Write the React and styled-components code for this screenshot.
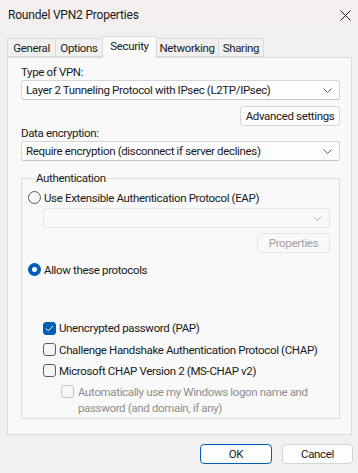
import React from 'react'
import styled, { createGlobalStyle } from 'styled-components'

const GlobalStyle = createGlobalStyle`
  body {
    margin: 0;
    background: #f0f0f0;
    font-family: Roboto, "Liberation Sans", sans-serif;
    font-size: 11.5px;
    letter-spacing: -0.35px;
    color: #1a1a1a;
    white-space: nowrap;
  }
`

const Window = styled.div`
  width: 358px;
  height: 473px;
  display: flex;
  flex-direction: column;
  background: #f0f0f0;
  border-radius: 0 0 8px 8px;
  overflow: hidden;
`

const TitleBar = styled.div`
  height: 30px;
  display: flex;
  align-items: center;
  justify-content: space-between;
  padding: 0 7px 0 8px;
  background: #f3efef;
  font-size: 12px;
  letter-spacing: -0.2px;
`

const Body = styled.div`
  flex: 1;
  display: flex;
  flex-direction: column;
  padding: 8px 6px 0 7px;
`

const TabStrip = styled.div`
  display: flex;
  align-items: flex-end;
  height: 19px;
  position: relative;
  z-index: 1;
`

const Tab = styled.div`
  width: ${p => p.w}px;
  height: ${p => (p.active ? '22px' : '19px')};
  margin-bottom: ${p => (p.active ? '-1px' : '0')};
  padding-top: ${p => (p.active ? '2px' : '0')};
  margin-left: ${p => (p.active ? '-1px' : '0')};
  margin-right: ${p => (p.active ? '-1px' : '0')};
  display: flex;
  justify-content: center;
  align-items: ${p => (p.active ? 'flex-start' : 'center')};
  box-sizing: border-box;
  background: ${p => (p.active ? '#f9f9f9' : '#f0f0f0')};
  border: 1px solid #dadada;
  border-bottom: ${p => (p.active ? 'none' : '1px solid #dadada')};
  border-left: ${p => (p.first || p.active ? '1px solid #dadada' : 'none')};
  z-index: ${p => (p.active ? 2 : 1)};
`

const Panel = styled.div`
  height: 378px;
  box-sizing: border-box;
  border: 1px solid #dadada;
  background: #f9f9f9;
  padding: 7px 11px 0 13px;
  display: flex;
  flex-direction: column;
`

const Label = styled.div`
  height: 15px;
  line-height: 15px;
`

const Select = styled.div`
  height: 20px;
  box-sizing: border-box;
  display: flex;
  align-items: center;
  justify-content: space-between;
  padding: 0 7px 0 4px;
  background: ${p => (p.disabled ? '#f9f9f9' : '#fdfdfd')};
  border: 1px solid ${p => (p.disabled ? '#e5e5e5' : '#d6d6d6')};
  border-bottom-color: ${p => (p.disabled ? '#e5e5e5' : '#c4c4c4')};
  border-radius: 3px;
`

const Button = styled.div`
  height: 20px;
  width: ${p => p.width}px;
  box-sizing: border-box;
  display: flex;
  align-items: center;
  justify-content: center;
  background: ${p => (p.disabled ? '#f9f9f9' : '#fdfdfd')};
  border: 1px solid ${p => (p.primary ? '#005fb8' : p.disabled ? '#e5e5e5' : '#d4d4d4')};
  border-radius: 4px;
  color: ${p => (p.disabled ? '#a2a2a2' : '#1a1a1a')};
`

const RightRow = styled.div`
  display: flex;
  justify-content: flex-end;
  margin: ${p => p.margin || '0'};
`

const Group = styled.fieldset`
  margin: 10px 0 0 0;
  padding: 1px 9px 0 6px;
  min-width: 0;
  height: 248px;
  box-sizing: border-box;
  border: 1px solid #dcdcdc;
  display: flex;
  flex-direction: column;
`

const Legend = styled.legend`
  padding: 0 1px;
  margin-left: 7px;
  line-height: 15px;
`

const OptionRow = styled.div`
  display: flex;
  align-items: center;
  gap: 3px;
  height: ${p => p.h || 21}px;
  margin: ${p => p.margin || '0'};
`

const Indent = styled.div`
  display: flex;
  flex-direction: column;
  padding-left: ${p => p.pad}px;
  margin: ${p => p.margin || '0'};
`

const Radio = styled.span`
  width: 13px;
  height: 13px;
  box-sizing: border-box;
  border-radius: 50%;
  flex: none;
  border: ${p => (p.checked ? '4px solid #005fb8' : '1px solid #5c5c5c')};
  background: ${p => (p.checked ? '#fff' : '#f6f6f6')};
`

const Box = styled.span`
  width: 13px;
  height: 13px;
  box-sizing: border-box;
  border-radius: 3px;
  flex: none;
  display: flex;
  align-items: center;
  justify-content: center;
  background: ${p => (p.checked ? '#005fb8' : '#f6f6f6')};
  border: 1px solid ${p => (p.checked ? '#005fb8' : p.disabled ? '#c6c6c6' : '#5c5c5c')};
`

const SubOption = styled.div`
  display: flex;
  align-items: flex-start;
  gap: 4px;
  margin-top: 3px;
  line-height: 16px;
  color: #8e8e8e;
  ${Box} { margin-top: 1px; }
`

const Footer = styled.div`
  display: flex;
  justify-content: flex-end;
  gap: 10px;
  padding: 9px 0 0 0;
  margin-right: -1px;
`

const Chevron = ({ color = '#5f5f5f' }) => (
  <svg width="9" height="5" viewBox="0 0 9 5">
    <path d="M0.5 0.5 L4.5 4.5 L8.5 0.5" fill="none" stroke={color} strokeWidth="1" />
  </svg>
)

const CloseIcon = () => (
  <svg width="11" height="11" viewBox="0 0 11 11">
    <path d="M0.5 0.5 L10.5 10.5 M10.5 0.5 L0.5 10.5" stroke="#1a1a1a" strokeWidth="1" />
  </svg>
)

const Check = () => (
  <svg width="9" height="7" viewBox="0 0 9 7">
    <path d="M1 3.5 L3.3 5.8 L8 1" fill="none" stroke="#fff" strokeWidth="1" />
  </svg>
)

const tabs = [
  { name: 'General', w: 49 },
  { name: 'Options', w: 47 },
  { name: 'Security', w: 55 },
  { name: 'Networking', w: 63 },
  { name: 'Sharing', w: 45 },
]

export default function App() {
  return (
    <Window>
      <GlobalStyle />
      <TitleBar>
        <span>Roundel VPN2 Properties</span>
        <CloseIcon />
      </TitleBar>
      <Body>
        <TabStrip>
          {tabs.map((t, i) => (
            <Tab key={t.name} w={t.w} first={i === 0} active={t.name === 'Security'}>{t.name}</Tab>
          ))}
        </TabStrip>
        <Panel>
          <Label>Type of VPN:</Label>
          <Select>
            <span>Layer 2 Tunneling Protocol with IPsec (L2TP/IPsec)</span>
            <Chevron />
          </Select>
          <RightRow margin="6px 0 0 0">
            <Button width={100}>Advanced settings</Button>
          </RightRow>
          <Label>Data encryption:</Label>
          <Select>
            <span>Require encryption (disconnect if server declines)</span>
            <Chevron />
          </Select>
          <Group>
            <Legend>Authentication</Legend>
            <OptionRow>
              <Radio />
              <span>Use Extensible Authentication Protocol (EAP)</span>
            </OptionRow>
            <Indent pad={15}>
              <Select disabled>
                <span />
                <Chevron color="#b5b5b5" />
              </Select>
              <RightRow margin="5px 0 0 0">
                <Button width={73} disabled>Properties</Button>
              </RightRow>
            </Indent>
            <OptionRow margin="6px 0 0 0">
              <Radio checked />
              <span>Allow these protocols</span>
            </OptionRow>
            <Indent pad={15} margin="37px 0 0 0">
              <OptionRow h={22}>
                <Box checked><Check /></Box>
                <span>Unencrypted password (PAP)</span>
              </OptionRow>
              <OptionRow>
                <Box />
                <span>Challenge Handshake Authentication Protocol (CHAP)</span>
              </OptionRow>
              <OptionRow>
                <Box />
                <span>Microsoft CHAP Version 2 (MS-CHAP v2)</span>
              </OptionRow>
              <Indent pad={18}>
                <SubOption>
                  <Box disabled />
                  <span>Automatically use my Windows logon name and<br />password (and domain, if any)</span>
                </SubOption>
              </Indent>
            </Indent>
          </Group>
        </Panel>
        <Footer>
          <Button width={72} primary>OK</Button>
          <Button width={71}>Cancel</Button>
        </Footer>
      </Body>
    </Window>
  )
}
